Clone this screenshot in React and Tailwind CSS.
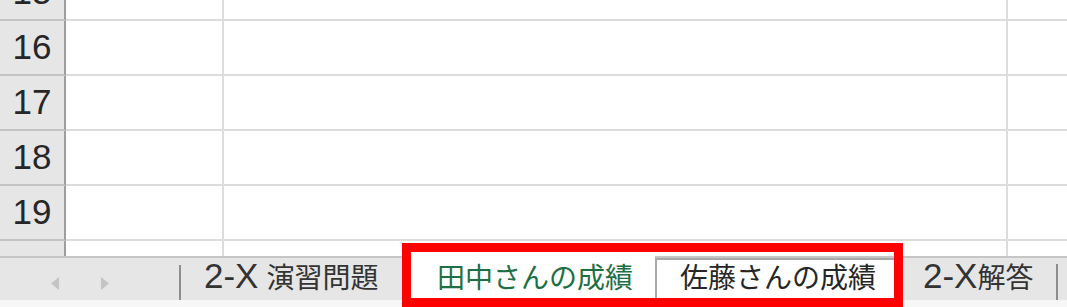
const ROWS = [15, 16, 17, 18, 19, 20]

const latin = "font-['Liberation_Sans',sans-serif] text-[35px]"
const cjk = "font-['Noto_Sans_CJK_JP',sans-serif] text-[28px]"

function Arrow({ dir }) {
  return (
    <svg width="10" height="13" viewBox="0 0 10 13" className="block">
      {dir === 'left' ? (
        <polygon points="9,0 9,13 1,6.5" fill="#c4c4c4" />
      ) : (
        <polygon points="1,0 1,13 9,6.5" fill="#c4c4c4" />
      )}
    </svg>
  )
}

// the last row is only partly visible, Excel leaves its header blank
function Row({ n, partial }) {
  return (
    <div className="flex h-[55px]">
      <div className="flex w-[66px] shrink-0 items-center justify-center border-r-2 border-b-2 border-r-[#9e9e9e] border-b-[#c3c3c3] bg-[#e6e6e6]">
        {!partial && (
          <span className={`${latin} -mt-[2px] leading-none text-[#262626]`}>{n}</span>
        )}
      </div>
      <div className="w-[158px] shrink-0 border-r-2 border-b-2 border-[#dcdcdc]" />
      <div className="w-[784px] shrink-0 border-r-2 border-b-2 border-[#dcdcdc]" />
      <div className="flex-1 border-b-2 border-[#dcdcdc]" />
    </div>
  )
}

export default function App() {
  return (
    <div className="relative flex h-[307px] w-[1067px] flex-col overflow-hidden bg-white">
      <div className="h-[256px] shrink-0 overflow-hidden">
        <div className="-mt-[34px]">
          {ROWS.map((n, i) => (
            <Row key={n} n={n} partial={i === ROWS.length - 1} />
          ))}
        </div>
      </div>

      <div className="flex h-[51px] shrink-0 flex-col border-t-2 border-[#c6c6c6]">
        <div className="flex h-[42px] bg-[#e6e6e6]">
          <div className="flex w-[179px] shrink-0 items-start gap-[40px] pl-[50px] pt-[19px]">
            <Arrow dir="left" />
            <Arrow dir="right" />
          </div>
          <div className="mt-[7px] w-[2px] shrink-0 bg-[#8e8e8e]" />

          <div className="flex w-[227px] shrink-0 items-baseline pl-[23px] pt-[2px] leading-[32px] text-[#333333]">
            <span className={latin}>2-X</span>
            <span className={`${cjk} ml-[8px]`}>演習問題</span>
          </div>

          <div className="-mt-[2px] flex h-[44px] w-[247px] shrink-0 items-baseline border-l border-[#c8c8c8] bg-white pl-[28px] pt-[4px] leading-[32px] text-[#1d7044]">
            <span className={cjk}>田中さんの成績</span>
          </div>

          <div className="flex w-[242px] shrink-0 items-baseline border-t-2 border-l-2 border-[#a8a8a8] bg-white pl-[23px] leading-[32px] text-[#262626]">
            <span className={cjk}>佐藤さんの成績</span>
          </div>

          <div className="flex w-[159px] shrink-0 items-baseline pl-[26px] pt-[2px] leading-[32px] text-[#333333]">
            <span className={latin}>2-X</span>
            <span className={cjk}>解答</span>
          </div>
          <div className="mt-[6px] w-[2px] shrink-0 bg-[#8e8e8e]" />
        </div>
        <div className="flex-1 bg-[#f7f7f7]" />
      </div>

      <div className="absolute top-[243px] left-[402px] h-[64px] w-[501px] border-[9px] border-[#ff0000]" />
    </div>
  )
}
